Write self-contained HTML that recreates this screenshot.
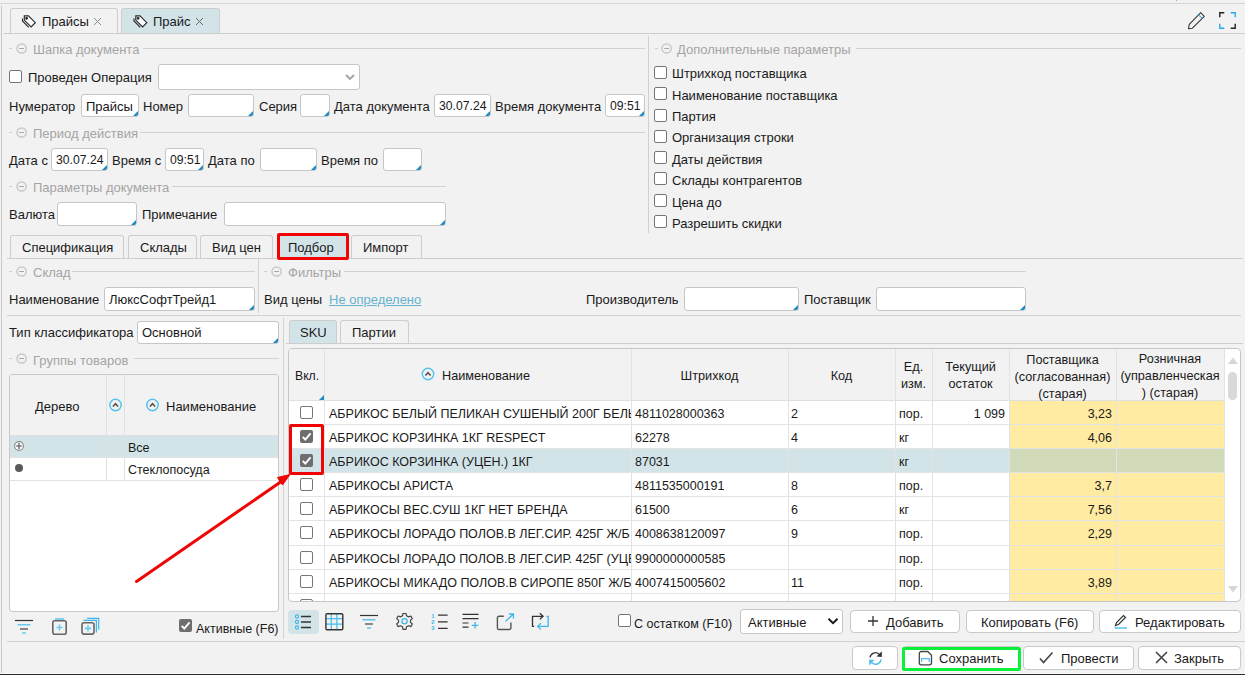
<!DOCTYPE html>
<html><head><meta charset="utf-8">
<style>
*{box-sizing:border-box;margin:0;padding:0}
html,body{width:1245px;height:675px;overflow:hidden;background:#f2f2f2}
body{position:relative;font-family:"Liberation Sans",sans-serif;font-size:13px;color:#1a1a1a}
.a{position:absolute}
.t{position:absolute;white-space:nowrap;line-height:15px;height:15px}
.hl{position:absolute;height:1px;background:#d2d2d2}
.vl{position:absolute;width:1px;background:#d2d2d2}
.inp{position:absolute;background:#fff;border:1px solid #c6c6c6;border-radius:3px;overflow:hidden}
.inp.tri::after{content:"";position:absolute;right:0;bottom:0;width:0;height:0;border-style:solid;border-width:0 0 5px 5px;border-color:transparent transparent #1b8ac4 transparent}
.inp span{position:absolute;left:4px;top:4px;line-height:15px;white-space:nowrap}
.dg{font-size:12.2px}
.cb{position:absolute;width:13px;height:13px;border:1px solid #767676;border-radius:2px;background:#fff}
.cbc{position:absolute;width:13px;height:13px;border-radius:2px;background:#6e6e6e}
.leg{position:absolute;color:#a5a5a5;white-space:nowrap;line-height:15px}
.lc{position:absolute;width:11px;height:11px;border:1px solid #c4c4c4;border-radius:50%}
.lc::after{content:"";position:absolute;left:2px;top:4px;width:5px;height:1px;background:#bdbdbd}
.tab{position:absolute;border:1px solid #cdcdcd;border-bottom:none;border-radius:3px 3px 0 0;background:#f2f2f2}
.tab.sel{background:#d3e4e9}
.btn{position:absolute;background:#fff;border:1px solid #c9c9c9;border-radius:4px}
</style></head><body>
<!-- frame -->
<div class="a" style="left:1176px;top:0;width:1px;height:1px;background:#aaa"></div>
<div class="hl" style="left:0;top:3px;width:1245px;background:#d6d6d6"></div>
<div class="vl" style="left:1px;top:6px;height:667px;background:#c9c9c9"></div>
<div class="a" style="left:0;top:673px;width:1245px;height:1px;background:#fafafa"></div>
<div class="a" style="left:0;top:674px;width:1245px;height:1px;background:#2a2a2a"></div>

<!-- top tabs -->
<div class="tab" style="left:10px;top:8px;width:108px;height:26px"></div>
<div class="tab sel" style="left:121px;top:8px;width:99px;height:26px"></div>
<div class="hl" style="left:4px;top:33px;width:1241px;background:#cdcdcd"></div>
<div class="t" style="left:42px;top:14px">Прайсы</div>
<div class="t" style="left:153px;top:14px">Прайс</div>


<!-- tab icons and close -->
<svg class="a" style="left:20px;top:14px;transform:translateX(0.5px)" width="17" height="16" viewBox="0 0 17 16"><g fill="none" stroke="#2a2a2a" stroke-width="1.15"><path d="M3.8 1.9 L8 1.9 L14.8 8.7 L10.6 12.9 L3.8 6.1 Z" fill="#fbfbfb"/><path d="M2 4.4 L2 6.9 L8.3 13.4"/><circle cx="6.1" cy="4.3" r="0.85" fill="#2a2a2a"/></g></svg>
<svg class="a" style="left:131px;top:14px;transform:translateX(1px)" width="17" height="16" viewBox="0 0 17 16"><g fill="none" stroke="#2a2a2a" stroke-width="1.15"><path d="M3.8 1.9 L8 1.9 L14.8 8.7 L10.6 12.9 L3.8 6.1 Z" fill="#fbfbfb"/><path d="M2 4.4 L2 6.9 L8.3 13.4"/><circle cx="6.1" cy="4.3" r="0.85" fill="#2a2a2a"/></g></svg>
<svg class="a" style="left:93px;top:17px" width="9" height="9" viewBox="0 0 9 9"><path d="M1 1L8 8M8 1L1 8" stroke="#8a8a8a" stroke-width="1"/></svg>
<svg class="a" style="left:195px;top:17px" width="9" height="9" viewBox="0 0 9 9"><path d="M1 1L8 8M8 1L1 8" stroke="#6a6a6a" stroke-width="1"/></svg>
<!-- pencil & fullscreen -->
<svg class="a" style="left:1185px;top:10px" width="22" height="22" viewBox="0 0 22 22"><path d="M3.5 18.6 L4.3 14.3 L15.7 2.7 L19.3 6.3 L7.4 18.2 Z" fill="none" stroke="#3a3a3a" stroke-width="1.1" stroke-linejoin="round"/><path d="M13.6 4.8 L17.2 8.4" stroke="#3ab0e8" stroke-width="1.1"/></svg>
<svg class="a" style="left:1218px;top:11px" width="20" height="20" viewBox="0 0 20 20"><g fill="none" stroke-width="1.4"><path d="M1.8 6.3V1.8H6.3" stroke="#222"/><path d="M12.7 1.8H17.2V6.3" stroke="#27aae8"/><path d="M1.8 12.7V17.2H6.3" stroke="#27aae8"/><path d="M12.7 17.2H17.2V12.7" stroke="#222"/></g></svg>

<!-- Шапка документа legend -->
<div class="hl" style="left:9px;top:48px;width:3px;background:#cfcfcf"></div>
<svg class="a" style="left:16px;top:43px" width="12" height="12" viewBox="0 0 12 12"><circle cx="5.6" cy="5.5" r="4.6" fill="none" stroke="#c9c9c9" stroke-width="1.5"/><path d="M3.2 5.5H8" stroke="#a6a6a6" stroke-width="1"/></svg>
<div class="leg" style="left:33px;top:42px">Шапка документа</div>
<div class="hl" style="left:143px;top:48px;width:502px"></div>
<div class="vl" style="left:648px;top:36px;height:197px;background:#d0d0d0"></div>

<div class="cb" style="left:9px;top:70px"></div>
<div class="t" style="left:28px;top:70px">Проведен Операция</div>
<div class="inp" style="left:158px;top:64px;width:202px;height:26px"></div>
<svg class="a" style="left:344px;top:73px" width="12" height="8" viewBox="0 0 12 8"><path d="M2 2 L6 6 L10 2" fill="none" stroke="#a4a4a4" stroke-width="1.9"/></svg>

<div class="t" style="left:9px;top:99px">Нумератор</div>
<div class="inp tri" style="left:81px;top:94px;width:58px;height:23px"><span>Прайсы</span></div>
<div class="t" style="left:143px;top:99px">Номер</div>
<div class="inp tri" style="left:188px;top:94px;width:66px;height:23px"></div>
<div class="t" style="left:259px;top:99px">Серия</div>
<div class="inp tri" style="left:300px;top:94px;width:30px;height:23px"></div>
<div class="t" style="left:334px;top:99px">Дата документа</div>
<div class="inp tri" style="left:434px;top:94px;width:57px;height:23px"><span class="dg">30.07.24</span></div>
<div class="t" style="left:495px;top:99px">Время документа</div>
<div class="inp tri" style="left:605px;top:94px;width:40px;height:23px"><span class="dg">09:51</span></div>

<!-- Период действия -->
<div class="hl" style="left:9px;top:132px;width:3px;background:#cfcfcf"></div>
<svg class="a" style="left:16px;top:127px" width="12" height="12" viewBox="0 0 12 12"><circle cx="5.6" cy="5.5" r="4.6" fill="none" stroke="#c9c9c9" stroke-width="1.5"/><path d="M3.2 5.5H8" stroke="#a6a6a6" stroke-width="1"/></svg>
<div class="leg" style="left:33px;top:126px">Период действия</div>
<div class="hl" style="left:140px;top:132px;width:505px"></div>
<div class="t" style="left:9px;top:153px">Дата с</div>
<div class="inp tri" style="left:51px;top:148px;width:57px;height:23px"><span class="dg">30.07.24</span></div>
<div class="t" style="left:112px;top:153px">Время с</div>
<div class="inp tri" style="left:165px;top:148px;width:39px;height:23px"><span class="dg">09:51</span></div>
<div class="t" style="left:208px;top:153px">Дата по</div>
<div class="inp tri" style="left:260px;top:148px;width:57px;height:23px"></div>
<div class="t" style="left:321px;top:153px">Время по</div>
<div class="inp tri" style="left:383px;top:148px;width:39px;height:23px"></div>

<!-- Параметры документа -->
<div class="hl" style="left:9px;top:186px;width:3px;background:#cfcfcf"></div>
<svg class="a" style="left:16px;top:181px" width="12" height="12" viewBox="0 0 12 12"><circle cx="5.6" cy="5.5" r="4.6" fill="none" stroke="#c9c9c9" stroke-width="1.5"/><path d="M3.2 5.5H8" stroke="#a6a6a6" stroke-width="1"/></svg>
<div class="leg" style="left:33px;top:180px">Параметры документа</div>
<div class="hl" style="left:172px;top:186px;width:274px"></div>
<div class="t" style="left:9px;top:207px">Валюта</div>
<div class="inp tri" style="left:57px;top:202px;width:80px;height:24px"></div>
<div class="t" style="left:142px;top:207px">Примечание</div>
<div class="inp tri" style="left:224px;top:202px;width:222px;height:24px"></div>

<!-- Дополнительные параметры -->
<div class="hl" style="left:655px;top:48px;width:3px;background:#cfcfcf"></div>
<svg class="a" style="left:661px;top:43px" width="12" height="12" viewBox="0 0 12 12"><circle cx="5.6" cy="5.5" r="4.6" fill="none" stroke="#c9c9c9" stroke-width="1.5"/><path d="M3.2 5.5H8" stroke="#a6a6a6" stroke-width="1"/></svg>
<div class="leg" style="left:677px;top:42px">Дополнительные параметры</div>
<div class="hl" style="left:856px;top:48px;width:385px"></div>
<div class="cb" style="left:654px;top:66px"></div>
<div class="t" style="left:672px;top:66px">Штрихкод поставщика</div>
<div class="cb" style="left:654px;top:87px"></div>
<div class="t" style="left:672px;top:88px">Наименование поставщика</div>
<div class="cb" style="left:654px;top:109px"></div>
<div class="t" style="left:672px;top:109px">Партия</div>
<div class="cb" style="left:654px;top:130px"></div>
<div class="t" style="left:672px;top:130px">Организация строки</div>
<div class="cb" style="left:654px;top:151px"></div>
<div class="t" style="left:672px;top:152px">Даты действия</div>
<div class="cb" style="left:654px;top:172px"></div>
<div class="t" style="left:672px;top:173px">Склады контрагентов</div>
<div class="cb" style="left:654px;top:194px"></div>
<div class="t" style="left:672px;top:195px">Цена до</div>
<div class="cb" style="left:654px;top:215px"></div>
<div class="t" style="left:672px;top:216px">Разрешить скидки</div>


<!-- inner tabs -->
<div class="tab" style="left:10px;top:235px;width:114px;height:24px"></div>
<div class="tab" style="left:128px;top:235px;width:69px;height:24px"></div>
<div class="tab" style="left:200px;top:235px;width:73px;height:24px"></div>
<div class="tab sel" style="left:279px;top:235px;width:69px;height:24px"></div>
<div class="tab" style="left:351px;top:235px;width:71px;height:24px"></div>
<div class="hl" style="left:7px;top:258px;width:1236px;background:#cdcdcd"></div>
<div class="t" style="left:22px;top:240px">Спецификация</div>
<div class="t" style="left:140px;top:240px">Склады</div>
<div class="t" style="left:212px;top:240px">Вид цен</div>
<div class="t" style="left:288px;top:240px">Подбор</div>
<div class="t" style="left:363px;top:240px">Импорт</div>

<!-- Склад -->
<div class="hl" style="left:9px;top:271px;width:3px;background:#cfcfcf"></div>
<svg class="a" style="left:16px;top:266px" width="12" height="12" viewBox="0 0 12 12"><circle cx="5.6" cy="5.5" r="4.6" fill="none" stroke="#c9c9c9" stroke-width="1.5"/><path d="M3.2 5.5H8" stroke="#a6a6a6" stroke-width="1"/></svg>
<div class="leg" style="left:33px;top:265px">Склад</div>
<div class="hl" style="left:72px;top:271px;width:183px"></div>
<div class="vl" style="left:258px;top:259px;height:54px"></div>
<div class="t" style="left:9px;top:292px">Наименование</div>
<div class="inp tri" style="left:104px;top:287px;width:151px;height:24px"><span>ЛюксСофтТрейд1</span></div>

<!-- Фильтры -->
<div class="hl" style="left:264px;top:271px;width:3px;background:#cfcfcf"></div>
<svg class="a" style="left:271px;top:266px" width="12" height="12" viewBox="0 0 12 12"><circle cx="5.6" cy="5.5" r="4.6" fill="none" stroke="#c9c9c9" stroke-width="1.5"/><path d="M3.2 5.5H8" stroke="#a6a6a6" stroke-width="1"/></svg>
<div class="leg" style="left:288px;top:265px">Фильтры</div>
<div class="hl" style="left:344px;top:271px;width:682px"></div>
<div class="t" style="left:264px;top:292px">Вид цены</div>
<div class="t" style="left:329px;top:292px;color:#66b2cf;text-decoration:underline">Не определено</div>
<div class="t" style="left:586px;top:292px">Производитель</div>
<div class="inp tri" style="left:684px;top:287px;width:115px;height:24px"></div>
<div class="t" style="left:804px;top:292px">Поставщик</div>
<div class="inp tri" style="left:876px;top:287px;width:150px;height:24px"></div>
<div class="hl" style="left:7px;top:315px;width:1234px"></div>

<!-- Тип классификатора -->
<div class="t" style="left:9px;top:325px">Тип классификатора</div>
<div class="inp tri" style="left:137px;top:321px;width:142px;height:23px"><span style="top:3px">Основной</span></div>
<div class="vl" style="left:283px;top:318px;height:321px"></div>

<!-- Группы товаров -->
<div class="hl" style="left:9px;top:358px;width:3px;background:#cfcfcf"></div>
<svg class="a" style="left:16px;top:353px" width="12" height="12" viewBox="0 0 12 12"><circle cx="5.6" cy="5.5" r="4.6" fill="none" stroke="#c9c9c9" stroke-width="1.5"/><path d="M3.2 5.5H8" stroke="#a6a6a6" stroke-width="1"/></svg>
<div class="leg" style="left:33px;top:353px">Группы товаров</div>
<div class="hl" style="left:134px;top:358px;width:145px"></div>
<div class="a" style="left:9px;top:374px;width:270px;height:238px;background:#fff;border:1px solid #c9c9c9;border-radius:3px;overflow:hidden">
  <div class="a" style="left:0;top:0;width:270px;height:61px;background:#f2f2f2;border-bottom:1px solid #dedede"></div>
  <div class="a" style="left:0;top:61px;width:270px;height:21px;background:#d3e4e9"></div>
  <div class="a" style="left:96px;top:0;width:1px;height:105px;background:#e0e0e0"></div>
  <div class="a" style="left:114px;top:0;width:1px;height:105px;background:#e0e0e0"></div>
  <div class="a" style="left:0;top:82px;width:270px;height:1px;background:#e3e3e3"></div>
  <div class="a" style="left:0;top:105px;width:270px;height:1px;background:#e3e3e3"></div>
</div>
<div class="t" style="left:35px;top:399px">Дерево</div>
<div class="t" style="left:166px;top:399px">Наименование</div>
<div class="t" style="left:128px;top:441px;font-size:12.5px">Все</div>
<div class="t" style="left:128px;top:463px;font-size:12.5px">Стеклопосуда</div>
<svg class="a" style="left:108px;top:398px;transform:translateX(0.5px)" width="14" height="14" viewBox="0 0 14 14"><circle cx="7" cy="7" r="5.7" fill="none" stroke="#55c3ee" stroke-width="1.5"/><path d="M4.4 8.5 L7 5.6 L9.6 8.5" fill="none" stroke="#555" stroke-width="1.6"/></svg>
<svg class="a" style="left:145px;top:398px;transform:translateX(0.5px)" width="14" height="14" viewBox="0 0 14 14"><circle cx="7" cy="7" r="5.7" fill="none" stroke="#55c3ee" stroke-width="1.5"/><path d="M4.4 8.5 L7 5.6 L9.6 8.5" fill="none" stroke="#555" stroke-width="1.6"/></svg>
<svg class="a" style="left:13px;top:440px" width="12" height="12" viewBox="0 0 12 12"><circle cx="6" cy="6" r="4.4" fill="#fafafa" stroke="#8a8a8a" stroke-width="1.1"/><path d="M3 6H9M6 3V9" stroke="#555" stroke-width="1.2"/></svg>
<div class="a" style="left:15px;top:464px;width:8px;height:8px;border-radius:50%;background:#5a5a5a"></div>

<!-- bottom-left toolbar -->
<svg class="a" style="left:14px;top:618px" width="20" height="18" viewBox="0 0 20 18"><path d="M1 2.5H19" stroke="#333" stroke-width="1.2"/><path d="M3.5 6.8H16.5" stroke="#4cc0ee" stroke-width="1.2"/><path d="M6 11H14" stroke="#444" stroke-width="1.2"/><path d="M8 15H12" stroke="#4cc0ee" stroke-width="1.2"/></svg>
<svg class="a" style="left:51px;top:617px" width="17" height="19" viewBox="0 0 17 19"><path d="M4 2H13" stroke="#5ac3ee" stroke-width="1.5"/><rect x="1.8" y="3.8" width="13.4" height="13.4" rx="2" fill="none" stroke="#666" stroke-width="1.6"/><path d="M8.5 7.5V13.5M5.5 10.5H11.5" stroke="#6ccaf0" stroke-width="1.6"/></svg>
<svg class="a" style="left:80px;top:617px" width="20" height="19" viewBox="0 0 20 19"><path d="M7.2 1.3H18.7V12.7" fill="none" stroke="#3cb6ec" stroke-width="1.2"/><path d="M3.5 3.4H16.4V15.5" fill="none" stroke="#3cb6ec" stroke-width="1.2"/><rect x="2" y="5.7" width="12" height="11.4" rx="2" fill="#f2f2f2" stroke="#666" stroke-width="1.6"/><path d="M8 8.3V14.5M4.9 11.4H11.1" stroke="#6ccaf0" stroke-width="1.6"/></svg>
<div class="cbc" style="left:179px;top:619px"></div>
<svg class="a" style="left:179px;top:619px" width="13" height="13" viewBox="0 0 13 13"><path d="M2.7 6.8 L5.3 9.5 L10.6 3.3" fill="none" stroke="#fff" stroke-width="1.9"/></svg>
<div class="t" style="left:196px;top:622px;font-size:12.5px">Активные (F6)</div>
<div class="hl" style="left:7px;top:641px;width:1238px"></div>


<!-- SKU tabs -->
<div class="tab sel" style="left:289px;top:320px;width:48px;height:24px"></div>
<div class="tab" style="left:340px;top:320px;width:69px;height:24px"></div>
<div class="hl" style="left:286px;top:343px;width:957px;background:#cdcdcd"></div>
<div class="t" style="left:300px;top:325px">SKU</div>
<div class="t" style="left:352px;top:325px">Партии</div>

<!-- main grid -->
<div class="a" style="left:288px;top:348px;width:953px;height:254px;background:#fff;border:1px solid #c6c6c6;border-radius:4px;overflow:hidden">
<div class="a" style="left:0;top:0;width:935px;height:51px;background:#f2f2f2"></div><div class="a" style="left:0;top:51px;width:935px;height:1px;background:#e0e0e0"></div><div class="a" style="left:720px;top:52px;width:215px;height:220px;background:#ffeba1"></div><div class="a" style="left:0;top:100px;width:720px;height:23px;background:#d3e4e9"></div><div class="a" style="left:720px;top:100px;width:215px;height:23px;background:#d2dbb9"></div><div class="a" style="left:0;top:75px;width:935px;height:1px;background:#e3e3e3"></div><div class="a" style="left:0;top:99px;width:935px;height:1px;background:#e3e3e3"></div><div class="a" style="left:0;top:123px;width:935px;height:1px;background:#e3e3e3"></div><div class="a" style="left:0;top:147px;width:935px;height:1px;background:#e3e3e3"></div><div class="a" style="left:0;top:171px;width:935px;height:1px;background:#e3e3e3"></div><div class="a" style="left:0;top:196px;width:935px;height:1px;background:#e3e3e3"></div><div class="a" style="left:0;top:220px;width:935px;height:1px;background:#e3e3e3"></div><div class="a" style="left:0;top:244px;width:935px;height:1px;background:#e3e3e3"></div><div class="a" style="left:35px;top:0;width:1px;height:260px;background:#e3e3e3"></div><div class="a" style="left:342px;top:0;width:1px;height:260px;background:#e3e3e3"></div><div class="a" style="left:499px;top:0;width:1px;height:260px;background:#e3e3e3"></div><div class="a" style="left:606px;top:0;width:1px;height:260px;background:#e3e3e3"></div><div class="a" style="left:643px;top:0;width:1px;height:260px;background:#e3e3e3"></div><div class="a" style="left:720px;top:0;width:1px;height:260px;background:#e3e3e3"></div><div class="a" style="left:827px;top:0;width:1px;height:260px;background:#e3e3e3"></div><div class="a" style="left:935px;top:0;width:1px;height:260px;background:#e3e3e3"></div><div class="a" style="left:30px;top:46px;width:0;height:0;border-style:solid;border-width:0 0 5px 5px;border-color:transparent transparent #1b8ac4 transparent"></div><svg class="a" style="left:939px;top:8px" width="10" height="7" viewBox="0 0 10 7"><path d="M0 7L5 0.5L10 7Z" fill="#d6d6d6"/></svg><div class="a" style="left:939px;top:23px;width:9px;height:28px;border-radius:5px;background:#d9d9d9"></div><svg class="a" style="left:939px;top:237px" width="10" height="7" viewBox="0 0 10 7"><path d="M0 0L5 6.5L10 0Z" fill="#d6d6d6"/></svg>
</div>
<div class="t" style="left:295px;top:369px;font-size:12.2px">Вкл.</div>
<svg class="a" style="left:421px;top:367px" width="14" height="14" viewBox="0 0 14 14"><circle cx="7" cy="7" r="5.7" fill="none" stroke="#55c3ee" stroke-width="1.5"/><path d="M4.4 8.5 L7 5.6 L9.6 8.5" fill="none" stroke="#555" stroke-width="1.6"/></svg>
<div class="t" style="left:442px;top:369px;font-size:12.7px">Наименование</div>
<div class="t" style="left:631px;top:369px;width:157px;text-align:center;font-size:12.7px">Штрихкод</div>
<div class="t" style="left:788px;top:369px;width:107px;text-align:center;font-size:12.7px">Код</div>
<div class="t" style="left:895px;top:360px;width:37px;text-align:center;font-size:12.7px">Ед.</div>
<div class="t" style="left:895px;top:377px;width:37px;text-align:center;font-size:12.7px">изм.</div>
<div class="t" style="left:932px;top:360px;width:77px;text-align:center;font-size:12.7px">Текущий</div>
<div class="t" style="left:932px;top:377px;width:77px;text-align:center;font-size:12.7px">остаток</div>
<div class="t" style="left:1009px;top:353px;width:107px;text-align:center;font-size:12.7px">Поставщика</div>
<div class="t" style="left:1009px;top:370px;width:107px;text-align:center;font-size:12.7px">(согласованная)</div>
<div class="t" style="left:1009px;top:387px;width:107px;text-align:center;font-size:12.7px">(старая)</div>
<div class="t" style="left:1116px;top:352px;width:108px;text-align:center;font-size:12.7px">Розничная</div>
<div class="t" style="left:1116px;top:369px;width:108px;text-align:center;font-size:12.7px">(управленческая</div>
<div class="t" style="left:1116px;top:386px;width:108px;text-align:center;font-size:12.7px">) (старая)</div>
<div class="cb" style="left:300px;top:406px"></div>
<div class="a" style="left:325px;top:400px;width:306px;height:24px;overflow:hidden"><div class="t" style="left:4px;top:7px;font-size:12.5px">АБРИКОС БЕЛЫЙ ПЕЛИКАН СУШЕНЫЙ 200Г БЕЛЬЁВО</div></div>
<div class="t" style="left:635px;top:407px;font-size:12.5px">4811028000363</div>
<div class="t" style="left:791px;top:407px;font-size:12.5px">2</div>
<div class="t" style="left:899px;top:407px;font-size:12.5px">пор.</div>
<div class="t" style="left:932px;top:407px;width:73px;text-align:right;font-size:12.5px">1 099</div>
<div class="t" style="left:1009px;top:407px;width:103px;text-align:right;font-size:12.5px">3,23</div>
<div class="cbc" style="left:300px;top:430px"></div><svg class="a" style="left:300px;top:430px" width="13" height="13" viewBox="0 0 13 13"><path d="M2.7 6.8 L5.3 9.5 L10.6 3.3" fill="none" stroke="#fff" stroke-width="1.9"/></svg>
<div class="a" style="left:325px;top:424px;width:306px;height:24px;overflow:hidden"><div class="t" style="left:4px;top:7px;font-size:12.5px">АБРИКОС КОРЗИНКА 1КГ RESPECT</div></div>
<div class="t" style="left:635px;top:431px;font-size:12.5px">62278</div>
<div class="t" style="left:791px;top:431px;font-size:12.5px">4</div>
<div class="t" style="left:899px;top:431px;font-size:12.5px">кг</div>
<div class="t" style="left:1009px;top:431px;width:103px;text-align:right;font-size:12.5px">4,06</div>
<div class="cbc" style="left:300px;top:454px"></div><svg class="a" style="left:300px;top:454px" width="13" height="13" viewBox="0 0 13 13"><path d="M2.7 6.8 L5.3 9.5 L10.6 3.3" fill="none" stroke="#fff" stroke-width="1.9"/></svg>
<div class="a" style="left:325px;top:448px;width:306px;height:24px;overflow:hidden"><div class="t" style="left:4px;top:7px;font-size:12.5px">АБРИКОС КОРЗИНКА (УЦЕН.) 1КГ</div></div>
<div class="t" style="left:635px;top:455px;font-size:12.5px">87031</div>
<div class="t" style="left:899px;top:455px;font-size:12.5px">кг</div>
<div class="cb" style="left:300px;top:478px"></div>
<div class="a" style="left:325px;top:472px;width:306px;height:24px;overflow:hidden"><div class="t" style="left:4px;top:7px;font-size:12.5px">АБРИКОСЫ АРИСТА</div></div>
<div class="t" style="left:635px;top:479px;font-size:12.5px">4811535000191</div>
<div class="t" style="left:791px;top:479px;font-size:12.5px">8</div>
<div class="t" style="left:899px;top:479px;font-size:12.5px">пор.</div>
<div class="t" style="left:1009px;top:479px;width:103px;text-align:right;font-size:12.5px">3,7</div>
<div class="cb" style="left:300px;top:502px"></div>
<div class="a" style="left:325px;top:496px;width:306px;height:24px;overflow:hidden"><div class="t" style="left:4px;top:7px;font-size:12.5px">АБРИКОСЫ ВЕС.СУШ 1КГ НЕТ БРЕНДА</div></div>
<div class="t" style="left:635px;top:503px;font-size:12.5px">61500</div>
<div class="t" style="left:791px;top:503px;font-size:12.5px">6</div>
<div class="t" style="left:899px;top:503px;font-size:12.5px">кг</div>
<div class="t" style="left:1009px;top:503px;width:103px;text-align:right;font-size:12.5px">7,56</div>
<div class="cb" style="left:300px;top:526px"></div>
<div class="a" style="left:325px;top:520px;width:306px;height:24px;overflow:hidden"><div class="t" style="left:4px;top:7px;font-size:12.5px">АБРИКОСЫ ЛОРАДО ПОЛОВ.В ЛЕГ.СИР. 425Г Ж/Б</div></div>
<div class="t" style="left:635px;top:527px;font-size:12.5px">4008638120097</div>
<div class="t" style="left:791px;top:527px;font-size:12.5px">9</div>
<div class="t" style="left:899px;top:527px;font-size:12.5px">пор.</div>
<div class="t" style="left:1009px;top:527px;width:103px;text-align:right;font-size:12.5px">2,29</div>
<div class="cb" style="left:300px;top:551px"></div>
<div class="a" style="left:325px;top:545px;width:306px;height:24px;overflow:hidden"><div class="t" style="left:4px;top:7px;font-size:12.5px">АБРИКОСЫ ЛОРАДО ПОЛОВ.В ЛЕГ.СИР. 425Г (УЦЕН.)</div></div>
<div class="t" style="left:635px;top:552px;font-size:12.5px">9900000000585</div>
<div class="t" style="left:899px;top:552px;font-size:12.5px">пор.</div>
<div class="cb" style="left:300px;top:575px"></div>
<div class="a" style="left:325px;top:569px;width:306px;height:24px;overflow:hidden"><div class="t" style="left:4px;top:7px;font-size:12.5px">АБРИКОСЫ МИКАДО ПОЛОВ.В СИРОПЕ 850Г Ж/Б</div></div>
<div class="t" style="left:635px;top:576px;font-size:12.5px">4007415005602</div>
<div class="t" style="left:791px;top:576px;font-size:12.5px">11</div>
<div class="t" style="left:899px;top:576px;font-size:12.5px">пор.</div>
<div class="t" style="left:1009px;top:576px;width:103px;text-align:right;font-size:12.5px">3,89</div>
<div class="a" style="left:289px;top:593px;width:35px;height:8px;overflow:hidden"><div class="cb" style="left:11px;top:6px"></div></div>


<!-- grid toolbar -->
<div class="a" style="left:288px;top:610px;width:31px;height:24px;border-radius:4px;background:#d3e4e9"></div>
<svg class="a" style="left:292px;top:612px" width="22" height="20" viewBox="0 0 22 20"><g fill="none" stroke="#3cb6ec" stroke-width="1.1"><circle cx="5" cy="4.5" r="1.6"/><circle cx="5" cy="10" r="1.6"/><circle cx="5" cy="15.5" r="1.6"/></g><g stroke="#333" stroke-width="1.4"><path d="M9 4.5H19M9 10H19M9 15.5H19"/></g></svg>
<svg class="a" style="left:324px;top:612px" width="20" height="19" viewBox="0 0 20 19"><path d="M7.3 2V17.5M12.9 2V17.5M2 6.7H18.5M2 12.1H18.5" stroke="#45bdee" stroke-width="1.2"/><rect x="1.9" y="1.7" width="16.9" height="16" rx="1.2" fill="none" stroke="#333" stroke-width="1.4"/></svg>
<svg class="a" style="left:359px;top:612px" width="20" height="19" viewBox="0 0 20 19"><path d="M1 3.5H19" stroke="#333" stroke-width="1.2"/><path d="M3.5 7.8H16.5" stroke="#3cb6ec" stroke-width="1.2"/><path d="M6 12H14" stroke="#444" stroke-width="1.2"/><path d="M8 16H12" stroke="#3cb6ec" stroke-width="1.2"/></svg>
<svg class="a" style="left:395px;top:612px" width="19" height="19" viewBox="0 0 19 19"><path d="M8 1.5H11L11.5 3.8L13.6 4.9L15.8 4L17.3 6.6L15.5 8.1V10.4L17.3 12L15.8 14.6L13.6 13.7L11.5 14.8L11 17.3H8L7.5 14.8L5.4 13.7L3.2 14.6L1.7 12L3.5 10.4V8.1L1.7 6.6L3.2 4L5.4 4.9L7.5 3.8Z" fill="none" stroke="#444" stroke-width="1.2" stroke-linejoin="round"/><circle cx="9.5" cy="9.3" r="2.6" fill="none" stroke="#3cb6ec" stroke-width="1.3"/></svg>
<svg class="a" style="left:430px;top:612px" width="19" height="19" viewBox="0 0 19 19"><g fill="#3cb6ec" font-family="Liberation Sans" font-weight="bold" font-size="5.8"><text x="1.3" y="5.8">1</text><text x="1.3" y="12">2</text><text x="1.3" y="18.2">3</text></g><path d="M8 3.2H17.6M8 9.9H17.6M8 16.3H17.6" stroke="#333" stroke-width="1.2"/></svg>
<svg class="a" style="left:461px;top:612px" width="20" height="19" viewBox="0 0 20 19"><path d="M1.5 2.4H17.5M1.5 6.6H17.5M1.5 11H7.5M1.5 15.2H7.5" stroke="#333" stroke-width="1.2"/><path d="M14.1 10V16.6M10.8 13.3H17.4" stroke="#3cb6ec" stroke-width="1.3"/></svg>
<svg class="a" style="left:496px;top:612px" width="19" height="19" viewBox="0 0 19 19"><path d="M7.8 4.3H3A1.6 1.6 0 0 0 1.4 5.9V15.9A1.6 1.6 0 0 0 3 17.5H13.3A1.6 1.6 0 0 0 14.9 15.9V10.5" fill="none" stroke="#555" stroke-width="1.4"/><path d="M9.5 9.4L17.4 2M12.9 2H17.4V6.6" fill="none" stroke="#3cb6ec" stroke-width="1.3"/></svg>
<svg class="a" style="left:531px;top:612px" width="20" height="19" viewBox="0 0 20 19"><path d="M3 14.4H1.5V4.3H12" fill="none" stroke="#333" stroke-width="1.3"/><path d="M8.8 1.2L12.1 4.3L8.8 7.4" fill="none" stroke="#333" stroke-width="1.3"/><path d="M15.5 4.3H17.2V14.4H7" fill="none" stroke="#3cb6ec" stroke-width="1.3"/><path d="M9.9 11.2L6.7 14.4L9.9 17.6" fill="none" stroke="#3cb6ec" stroke-width="1.3"/></svg>

<div class="cb" style="left:618px;top:614px"></div>
<div class="t" style="left:634px;top:617px;font-size:12.5px">С остатком (F10)</div>
<div class="inp" style="left:740px;top:609px;width:103px;height:25px"><span style="left:7px;top:5px;font-size:13px">Активные</span></div>
<svg class="a" style="left:827px;top:617px" width="12" height="8" viewBox="0 0 12 8"><path d="M1.5 1.8 L6 6.2 L10.5 1.8" fill="none" stroke="#1a1a1a" stroke-width="2"/></svg>

<div class="btn" style="left:850px;top:610px;width:110px;height:23px"></div>
<svg class="a" style="left:866px;top:614px" width="14" height="14" viewBox="0 0 14 14"><path d="M7 2V12M2 7H12" stroke="#333" stroke-width="1.3"/></svg>
<div class="t" style="left:886px;top:615px">Добавить</div>
<div class="btn" style="left:966px;top:610px;width:128px;height:23px"></div>
<div class="t" style="left:981px;top:615px">Копировать (F6)</div>
<div class="btn" style="left:1099px;top:610px;width:142px;height:23px"></div>
<svg class="a" style="left:1113px;top:613px" width="16" height="17" viewBox="0 0 16 17"><path d="M2.5 12.5L3.5 9.5L10.5 2.5L12.5 4.5L5.5 11.5Z" fill="none" stroke="#333" stroke-width="1.2"/><path d="M1.5 15H14" stroke="#3cb6ec" stroke-width="1.3"/></svg>
<div class="t" style="left:1135px;top:615px">Редактировать</div>

<!-- bottom buttons -->
<div class="btn" style="left:852px;top:646px;width:46px;height:24px"></div>
<svg class="a" style="left:865px;top:649px" width="18" height="18" viewBox="0 0 18 18"><path d="M5 8.5A5.5 5.5 0 0 1 14.2 5.2" fill="none" stroke="#333" stroke-width="1.3"/><path d="M16.8 2.3L16.8 8L11.6 7.6Z" fill="#333"/><path d="M16 10.5A5.5 5.5 0 0 1 6.8 13.8" fill="none" stroke="#4cbdee" stroke-width="1.5"/><path d="M4.2 16.5L4.2 10.5L9.4 11Z" fill="#4cbdee"/></svg>
<div class="btn" style="left:902px;top:646px;width:119px;height:24px"></div>
<svg class="a" style="left:917px;top:650px" width="16" height="16" viewBox="0 0 16 16"><path d="M4.3 1.5H10.8L14.5 5.2V12.8A2 2 0 0 1 12.5 14.8H4.3A2 2 0 0 1 2.3 12.8V3.5A2 2 0 0 1 4.3 1.5Z" fill="none" stroke="#444" stroke-width="1.3"/><path d="M4.6 12.3V8.7H12.2V12.3" fill="none" stroke="#4cbdee" stroke-width="1.2"/></svg>
<div class="t" style="left:939px;top:651px">Сохранить</div>
<div class="btn" style="left:1023px;top:646px;width:111px;height:24px"></div>
<svg class="a" style="left:1038px;top:650px" width="16" height="16" viewBox="0 0 16 16"><path d="M2 8.5L5.5 12.5L14.5 2.5" fill="none" stroke="#444" stroke-width="1.6"/></svg>
<div class="t" style="left:1061px;top:651px">Провести</div>
<div class="btn" style="left:1138px;top:646px;width:103px;height:24px"></div>
<svg class="a" style="left:1154px;top:650px" width="15" height="15" viewBox="0 0 15 15"><path d="M2 2L13 13M13 2L2 13" stroke="#444" stroke-width="1.6"/></svg>
<div class="t" style="left:1174px;top:651px">Закрыть</div>

<!-- annotations -->
<div class="a" style="left:277px;top:233px;width:72px;height:27px;border:3px solid #f00505;border-radius:2px"></div>
<div class="a" style="left:289px;top:424px;width:35px;height:51px;border:3px solid #f00505;border-radius:2px"></div>
<div class="a" style="left:902px;top:647px;width:119px;height:24px;border:3px solid #0cf03a;border-radius:2px"></div>
<svg class="a" style="left:0;top:0" width="1245" height="675" viewBox="0 0 1245 675"><path d="M136.5 581.5L282 481" stroke="#f00505" stroke-width="3" stroke-linecap="round"/><path d="M290 474.5L277.5 477.5L282.5 485Z" fill="#f00505" stroke="#f00505" stroke-width="1"/></svg>

</body></html>
